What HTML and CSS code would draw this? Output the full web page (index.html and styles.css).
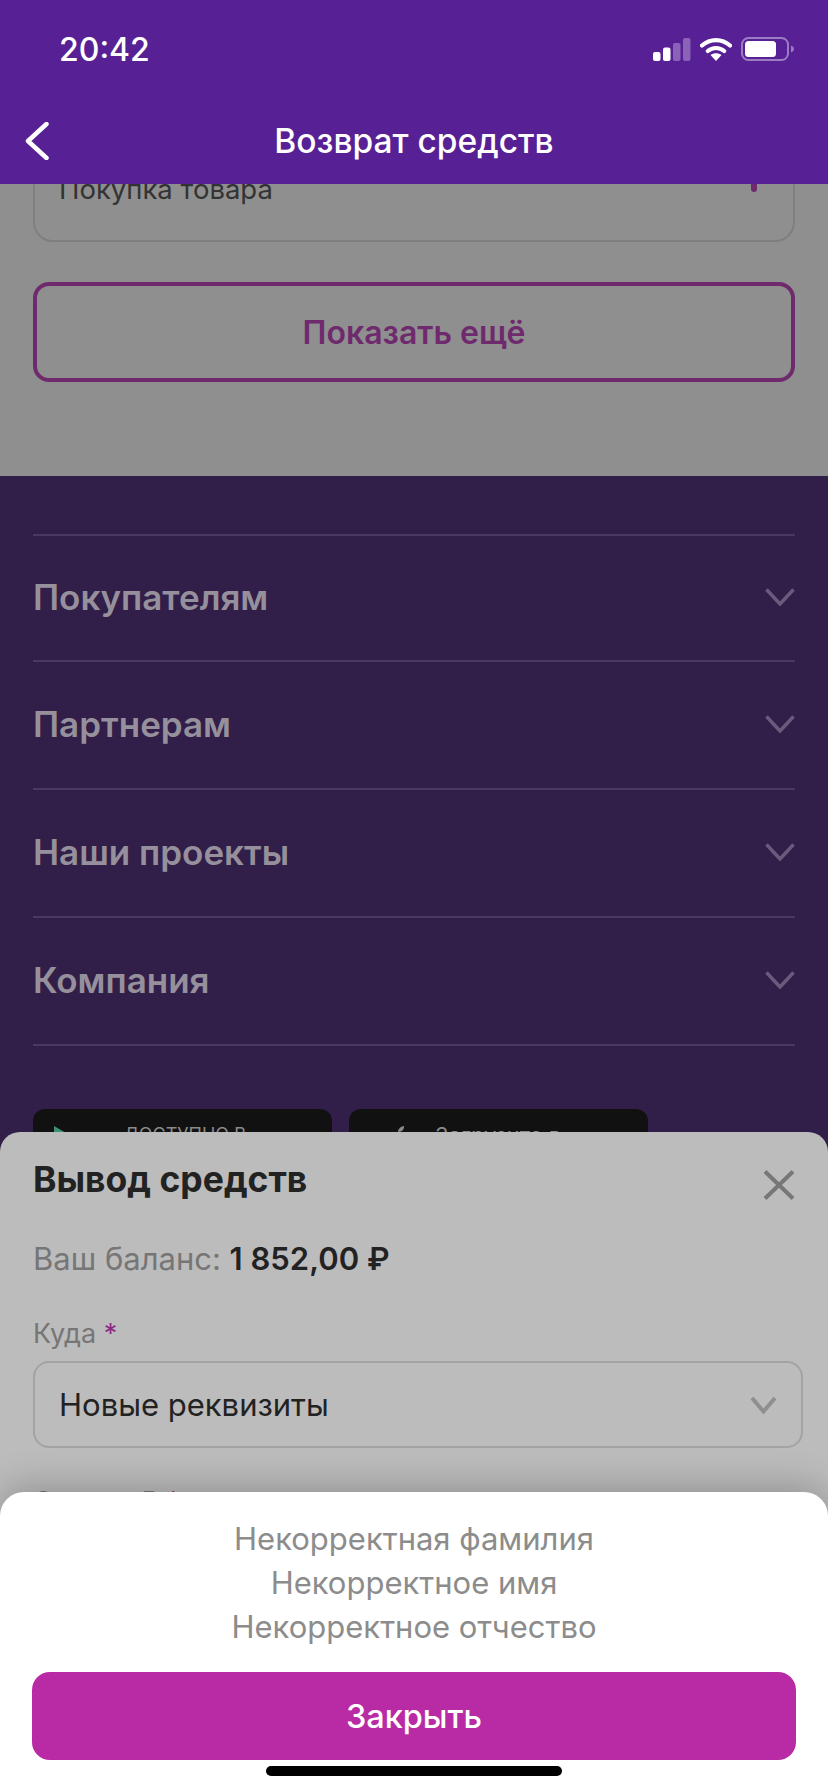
FILE: index.html
```html
<!DOCTYPE html>
<html>
<head>
  <meta charset="utf-8">
  <link rel="stylesheet" href="styles.css">
</head>
<body>
  <div class="screen">
    <main class="content">
      <div class="select-field">
        <span>Покупка товара</span>
        <i class="select-mark"></i>
      </div>
      <button class="more-btn">Показать ещё</button>
    </main>

    <footer class="footer">
      <div class="footer-row">
        <span>Покупателям</span>
        <svg class="footer-chevron" viewBox="0 0 30 18"><path d="M1.5 1.5 15 16 28.500 1.500"/></svg>
      </div>
      <div class="footer-row">
        <span>Партнерам</span>
        <svg class="footer-chevron" viewBox="0 0 30 18"><path d="M1.5 1.5 15 16 28.500 1.500"/></svg>
      </div>
      <div class="footer-row">
        <span>Наши проекты</span>
        <svg class="footer-chevron" viewBox="0 0 30 18"><path d="M1.5 1.5 15 16 28.500 1.500"/></svg>
      </div>
      <div class="footer-row footer-row-last">
        <span>Компания</span>
        <svg class="footer-chevron" viewBox="0 0 30 18"><path d="M1.5 1.5 15 16 28.500 1.500"/></svg>
      </div>
      <div class="stores">
        <div class="store store-google">
          <svg class="store-icon" viewBox="0 0 14 16"><path d="M0 0 14 8 0 16z" fill="#3f8f78"/></svg>
          <span>ДОСТУПНО В</span>
        </div>
        <div class="store store-apple">
          <svg class="store-icon" viewBox="0 0 12 16"><path d="M10 0C10.500 3 8 6 4 6 4 3 6.500 .5 10 0z" fill="#8a8a8a"/></svg>
          <span>Загрузите в</span>
        </div>
      </div>
    </footer>

    <header class="topbar">
      <div class="statusbar">
        <span class="time">20:42</span>
        <div class="status-icons">
          <svg class="signal" width="38" height="23" viewBox="0 0 38 23">
            <rect x="0" y="14" width="7.500" height="9" rx="2" fill="#fff"/>
            <rect x="10" y="9.500" width="7.500" height="13.500" rx="2" fill="#fff"/>
            <rect x="20" y="5" width="7.500" height="18" rx="2" fill="#8a63b8"/>
            <rect x="30" y="0" width="7.500" height="23" rx="2" fill="#8a63b8"/>
          </svg>
          <svg class="wifi" width="32" height="24" viewBox="0 0 32 24">
            <path d="M2 8.500C10 1.200 22 1.200 30 8.500" fill="none" stroke="#fff" stroke-width="4.200" stroke-linecap="round"/>
            <path d="M7.800 14C12.500 10 19.500 10 24.200 14" fill="none" stroke="#fff" stroke-width="4.200" stroke-linecap="round"/>
            <path d="M16 24 10.500 18C13.700 15.500 18.300 15.500 21.500 18z" fill="#fff"/>
          </svg>
          <svg class="battery" width="53" height="24" viewBox="0 0 53 24">
            <rect x="1" y="1" width="46" height="22" rx="6.500" fill="none" stroke="#9b7cc4" stroke-width="2"/>
            <rect x="4" y="4" width="31" height="16" rx="3.500" fill="#fff"/>
            <path d="M50 8.500C52 9.500 53 10.500 53 12S52 14.500 50 15.500z" fill="#9b7cc4"/>
          </svg>
        </div>
      </div>
      <div class="navbar">
        <svg class="back" width="24" height="38" viewBox="0 0 24 38"><path d="M21.500 2 3 19 21.500 36"/></svg>
        <span class="navbar-title">Возврат средств</span>
      </div>
    </header>

    <section class="sheet-withdraw">
      <div class="sheet-head">
        <h2>Вывод средств</h2>
        <svg class="close" width="32" height="30" viewBox="0 0 32 30"><path d="M2 1.500 30 28.500M30 1.500 2 28.500"/></svg>
      </div>
      <p class="balance">Ваш баланс: <b>1 852,00 ₽</b></p>
      <label class="field-label">Куда <em>*</em></label>
      <div class="sheet-select">
        <span>Новые реквизиты</span>
        <svg class="select-chevron" width="27" height="18" viewBox="0 0 27 18"><path d="M2 2 13.500 15.500 25 2"/></svg>
      </div>
      <label class="field-label field-label-next">Сумма, ₽ <em>*</em></label>
    </section>

    <section class="sheet-errors">
      <div class="errors">
        <div>Некорректная фамилия</div>
        <div>Некорректное имя</div>
        <div>Некорректное отчество</div>
      </div>
      <button class="close-btn">Закрыть</button>
      <div class="home-indicator"></div>
    </section>
  </div>
</body>
</html>
```

FILE: styles.css
```css
* {
  box-sizing: border-box;
}

html, body {
  margin: 0;
  padding: 0;
}

body {
  font-family: Inter, "Noto Sans", sans-serif;
  color: #222;
}

.screen {
  position: relative;
  width: 828px;
  height: 1792px;
  overflow: hidden;
  background: #8f8f8f;
}

/* page behind the overlays */
.content {
  height: 476px;
  padding: 145px 33px 0;
  background: #8f8f8f;
}

.select-field {
  display: flex;
  align-items: center;
  justify-content: space-between;
  height: 97px;
  padding: 0 36px 9px 24px;
  border: 2px solid #7f7f7f;
  border-radius: 20px;
  font-size: 27.500px;
  color: #333;
}

.select-mark {
  width: 6px;
  height: 8px;
  margin-bottom: 3px;
  border-radius: 0 0 3px 3px;
  background: #6f2a6e;
}

.more-btn {
  display: block;
  width: 100%;
  height: 100px;
  margin-top: 40px;
  border: 4px solid #6f2a6e;
  border-radius: 16px;
  background: transparent;
  font-family: inherit;
  font-size: 32px;
  font-weight: 600;
  color: #6f2a6e;
}

.footer {
  height: 1316px;
  padding: 58px 33px 0;
  background: #311e49;
}

.footer-row {
  display: flex;
  align-items: center;
  justify-content: space-between;
  height: 128px;
  padding-bottom: 2px;
  border-top: 2px solid #4a3763;
  font-size: 35px;
  font-weight: 600;
  color: #96909c;
}

.footer-row:first-child {
  height: 126px;
}

.footer-row-last {
  height: 130px;
  border-bottom: 2px solid #4a3763;
}

.footer-chevron {
  width: 30px;
  height: 18px;
  fill: none;
  stroke: #6b5a7d;
  stroke-width: 3.500;
}

.stores {
  display: flex;
  gap: 17px;
  margin-top: 63px;
}

.store {
  display: flex;
  align-items: flex-start;
  width: 299px;
  height: 88px;
  border-radius: 12px;
  background: #111;
  color: #8a8a8a;
}

.store-google {
  padding: 17px 0 0 21px;
  font-size: 18px;
}

.store-google span {
  margin-left: 56px;
  line-height: 18px;
}

.store-apple {
  padding: 17px 0 0 44px;
  font-size: 22px;
}

.store-apple span {
  margin-left: 28px;
  line-height: 18px;
}

.store-icon {
  width: 14px;
  height: 16px;
}

/* top bar stays over the scrolled page */
.topbar {
  position: absolute;
  top: 0;
  left: 0;
  width: 100%;
  height: 184px;
  background: #572195;
  color: #fff;
}

.statusbar {
  display: flex;
  align-items: center;
  justify-content: space-between;
  height: 98px;
  padding: 0 34px 0 59px;
}

.time {
  font-size: 32px;
  font-weight: 500;
}

.status-icons {
  display: flex;
  align-items: center;
  gap: 9px;
}

.navbar {
  position: relative;
  display: flex;
  align-items: center;
  justify-content: center;
  height: 86px;
}

.back {
  position: absolute;
  left: 25px;
  top: 24px;
  fill: none;
  stroke: #fff;
  stroke-width: 4.500;
  stroke-linecap: round;
  stroke-linejoin: round;
}

.navbar-title {
  font-size: 33.500px;
  font-weight: 500;
}

/* bottom sheets */
.sheet-withdraw {
  position: absolute;
  top: 1132px;
  left: 0;
  width: 100%;
  height: 660px;
  padding: 26px 25px 0 33px;
  border-radius: 20px 20px 0 0;
  background: #bcbcbc;
}

.sheet-head {
  display: flex;
  align-items: center;
  justify-content: space-between;
  padding-right: 8px;
}

.sheet-head h2 {
  margin: 0;
  font-size: 35.500px;
  font-weight: 700;
  color: #222;
}

.close {
  margin-top: 10px;
  fill: none;
  stroke: #777;
  stroke-width: 4;
}

.balance {
  margin: 39px 0 0;
  font-size: 31px;
  color: #767676;
}

.balance b {
  font-weight: 600;
  color: #222;
}

.field-label {
  display: block;
  margin-top: 40px;
  font-size: 27px;
  color: #767676;
}

.field-label em {
  font-style: normal;
  color: #8d2a86;
}

.sheet-select {
  display: flex;
  align-items: center;
  justify-content: space-between;
  height: 87px;
  margin-top: 11px;
  padding: 0 24px 0 24px;
  border: 2px solid #a3a3a3;
  border-radius: 16px;
  font-size: 31px;
  color: #222;
}

.select-chevron {
  fill: none;
  stroke: #8f8f8f;
  stroke-width: 4;
}

.field-label-next {
  margin-top: 37px;
}

.sheet-errors {
  position: absolute;
  left: 0;
  bottom: 0;
  width: 100%;
  height: 300px;
  padding: 25px 32px 0;
  border-radius: 24px 24px 0 0;
  background: #fff;
  box-shadow: 0 -6px 36px rgba(0, 0, 0, .22);
}

.errors {
  text-align: center;
  font-size: 31px;
  line-height: 44px;
  color: #8c8c8c;
}

.close-btn {
  display: block;
  width: 100%;
  height: 88px;
  margin-top: 23px;
  border: none;
  border-radius: 18px;
  background: #b92ba4;
  font-family: inherit;
  font-size: 32.500px;
  font-weight: 500;
  color: #fff;
}

.home-indicator {
  width: 296px;
  height: 10px;
  margin: 6px auto 0;
  border-radius: 5px;
  background: #000;
}
```
